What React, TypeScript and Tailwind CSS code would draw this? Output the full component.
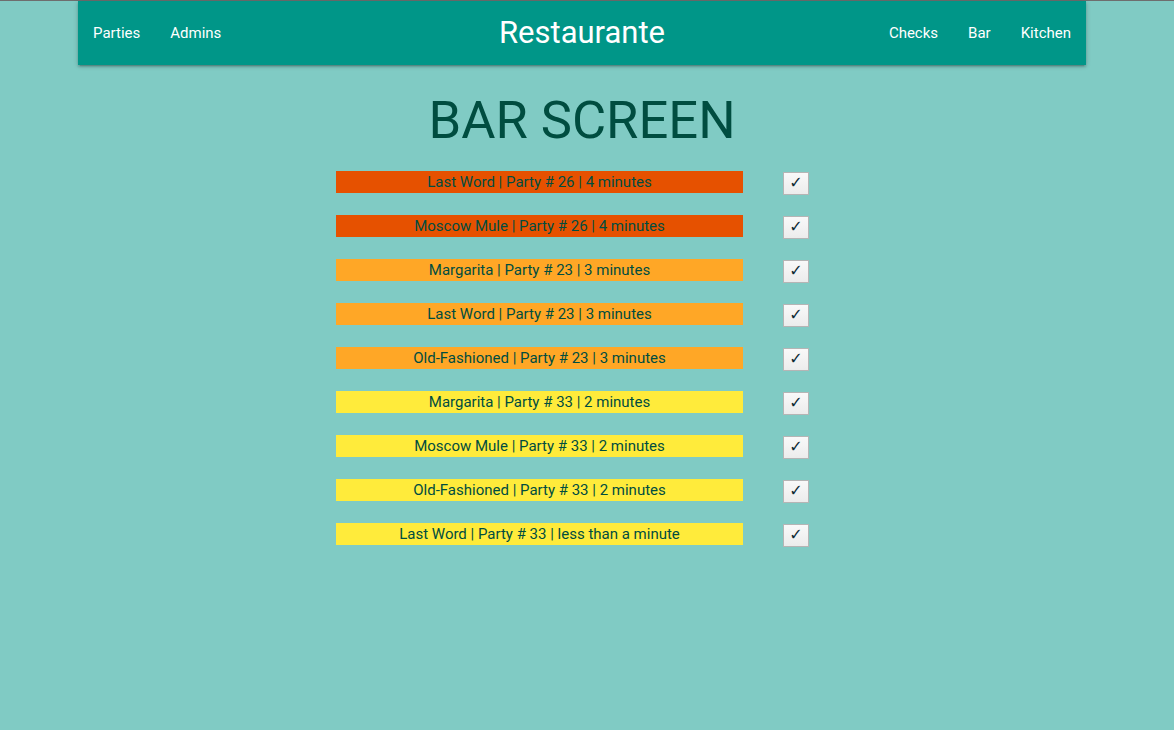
import React from "react";

const rows: { text: string; color: string }[] = [
  { text: "Last Word | Party # 26 | 4 minutes", color: "bg-[#e65100]" },
  { text: "Moscow Mule | Party # 26 | 4 minutes", color: "bg-[#e65100]" },
  { text: "Margarita | Party # 23 | 3 minutes", color: "bg-[#ffa726]" },
  { text: "Last Word | Party # 23 | 3 minutes", color: "bg-[#ffa726]" },
  { text: "Old-Fashioned | Party # 23 | 3 minutes", color: "bg-[#ffa726]" },
  { text: "Margarita | Party # 33 | 2 minutes", color: "bg-[#ffeb3b]" },
  { text: "Moscow Mule | Party # 33 | 2 minutes", color: "bg-[#ffeb3b]" },
  { text: "Old-Fashioned | Party # 33 | 2 minutes", color: "bg-[#ffeb3b]" },
  { text: "Last Word | Party # 33 | less than a minute", color: "bg-[#ffeb3b]" },
];

export default function App() {
  return (
    <div
      className="min-h-[730px] w-full bg-[#80cbc4] border-t border-[#6e6e6e]"
      style={{ fontFamily: "Roboto, 'Liberation Sans', sans-serif" }}
    >
      <nav className="ml-[78px] w-[1008px] h-[64px] bg-[#009688] flex items-center justify-between text-white shadow-[0_2px_2px_0_rgba(0,0,0,0.14),0_3px_1px_-2px_rgba(0,0,0,0.12),0_1px_5px_0_rgba(0,0,0,0.2)] relative">
        <div className="flex text-[15px]">
          <a className="px-[15px] leading-[64px]">Parties</a>
          <a className="px-[15px] leading-[64px]">Admins</a>
        </div>
        <div className="absolute left-1/2 -translate-x-1/2 text-[31px] leading-[64px]">Restaurante</div>
        <div className="flex text-[15px]">
          <a className="px-[15px] leading-[64px]">Checks</a>
          <a className="px-[15px] leading-[64px]">Bar</a>
          <a className="px-[15px] leading-[64px]">Kitchen</a>
        </div>
      </nav>
      <h2 className="mt-[26px] w-[1164px] text-center text-[52.5px] leading-[58.7px] text-[#004d40]">BAR SCREEN</h2>
      <div className="mt-[21px] flex flex-col gap-[22px] pl-[336px]">
        {rows.map((r, i) => (
          <div key={i} className="flex items-start h-[22px]">
            <div
              className={`${r.color} w-[407px] h-[22px] text-center text-[15px] leading-[22px] text-[#004d40]`}
            >
              {r.text}
            </div>
            <div className="ml-[40px] mt-[1px] w-[26px] h-[23px] border border-[#b5b5b5] bg-gradient-to-b from-[#f9f9f9] to-[#ececec] flex items-center justify-center text-[16px] font-bold leading-none text-[#0d2b35]"
              style={{ fontFamily: "'DejaVu Sans', sans-serif" }}
            >
              ✓
            </div>
          </div>
        ))}
      </div>
    </div>
  );
}
